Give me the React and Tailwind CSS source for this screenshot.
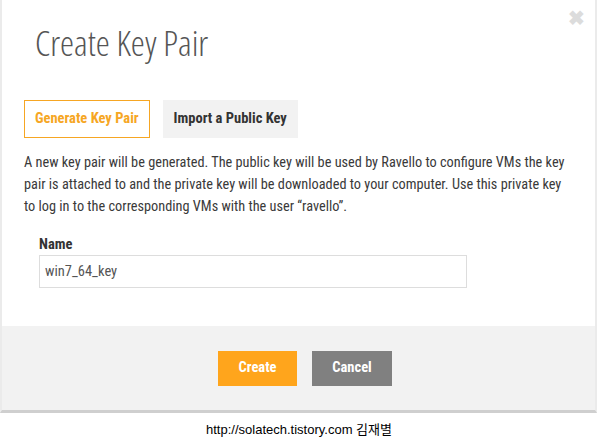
import React, { useState } from "react";

function App() {
  const [tab, setTab] = useState("generate");
  const [name, setName] = useState("win7_64_key");

  return (
    <div className="w-[598px] h-[448px] bg-white flex flex-col font-['Roboto',sans-serif] font-stretch-condensed">
      <div className="w-[597px] h-[413px] flex flex-col border-x-2 border-[#ebebeb] border-b-[3px] border-b-[#cfcfcf]">
        <div className="relative flex-1 flex flex-col pl-[22px] pr-[26px]">
          <button className="absolute top-[8px] right-[10px] text-[#dcdcdc] text-[20px] leading-none font-bold">
            ✖
          </button>

          {/* title */}
          <h1 className="mt-[20px] ml-[11px] text-[35.5px] leading-[45px] font-light text-[#555] font-['Open_Sans',sans-serif]">
            Create Key Pair
          </h1>

          {/* tabs */}
          <div className="mt-[35px] flex gap-[13px]">
            <button
              className={
                tab === "generate"
                  ? "h-[38px] px-[10px] border border-[#f6a623] text-[#f6a623] text-[14.5px] font-bold bg-white"
                  : "h-[38px] px-[10px] bg-[#f2f2f2] text-[#333] text-[14.5px] font-bold"
              }
              onClick={() => setTab("generate")}
            >
              Generate Key Pair
            </button>
            <button
              className={
                tab === "import"
                  ? "h-[38px] px-[11px] border border-[#f6a623] text-[#f6a623] text-[14.5px] font-bold bg-white"
                  : "h-[38px] px-[11px] bg-[#f2f2f2] text-[#333] text-[14.5px] font-bold"
              }
              onClick={() => setTab("import")}
            >
              Import a Public Key
            </button>
          </div>

          {/* description */}
          <p className="mt-[13px] text-[14.3px] leading-[22px] text-[#3a3a3a]">
            A new key pair will be generated. The public key will be used by Ravello to configure VMs the key
            pair is attached to and the private key will be downloaded to your computer. Use this private key to
            log in to the corresponding VMs with the user “ravello”.
          </p>

          {/* name field */}
          <div className="mt-[19px] ml-[15px] flex flex-col gap-[1px]">
            <label className="text-[14.5px] leading-[18px] font-bold text-[#333]">Name</label>
            <input
              className="w-[428px] h-[33px] px-[5px] border border-[#ddd] text-[14.5px] text-[#555] outline-none font-stretch-condensed"
              value={name}
              onChange={({ target }) => setName(target.value)}
              autoFocus
            />
          </div>
        </div>

        {/* footer */}
        <div className="h-[84px] bg-[#f2f2f2] flex justify-center items-center gap-[15px] pl-[13px]">
          <button className="w-[79px] h-[35px] bg-[#ffa51c] text-white text-[14.5px] font-bold">Create</button>
          <button className="w-[80px] h-[35px] bg-[#808080] text-white text-[14.5px] font-bold">Cancel</button>
        </div>
      </div>

      <div className="flex-1 flex items-center justify-center text-[13px] text-black pb-[2px] font-stretch-normal font-['Liberation_Sans','Noto_Sans_CJK_KR',sans-serif]">
        http://solatech.tistory.com 김재별
      </div>
    </div>
  );
}

export default App;
